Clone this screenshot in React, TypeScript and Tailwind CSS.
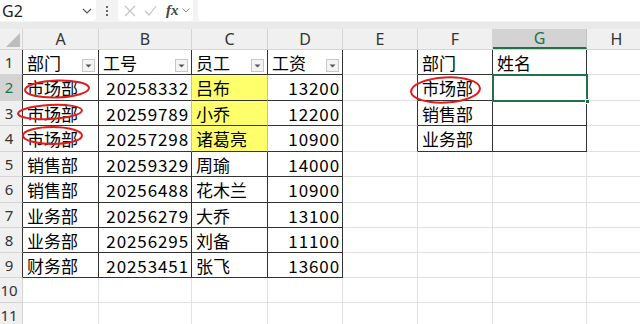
import React from "react";

const COLS = [
  { k: "A", w: 76 },
  { k: "B", w: 93 },
  { k: "C", w: 76 },
  { k: "D", w: 75 },
  { k: "E", w: 75 },
  { k: "F", w: 75 },
  { k: "G", w: 94 },
  { k: "H", w: 60 },
];
const ROW_H = [25, 26, 25, 26, 25, 26, 25, 25, 25, 25, 25, 25];

type Cell = { t?: string; right?: boolean; num?: boolean };
const data: Record<string, Cell> = {};
const put = (ref: string, t: string, right = false, num = false) => (data[ref] = { t, right, num });
put("A1", "部门");
put("B1", "工号");
put("C1", "员工");
put("D1", "工资");
const rows = [
  ["市场部", "20258332", "吕布", "13200"],
  ["市场部", "20259789", "小乔", "12200"],
  ["市场部", "20257298", "诸葛亮", "10900"],
  ["销售部", "20259329", "周瑜", "14000"],
  ["销售部", "20256488", "花木兰", "10900"],
  ["业务部", "20256279", "大乔", "13100"],
  ["业务部", "20256295", "刘备", "11100"],
  ["财务部", "20253451", "张飞", "13600"],
];
rows.forEach((r, i) => {
  const n = i + 2;
  put("A" + n, r[0]);
  put("B" + n, r[1], true, true);
  put("C" + n, r[2]);
  put("D" + n, r[3], true, true);
});
put("F1", "部门");
put("G1", "姓名");
put("F2", "市场部");
put("F3", "销售部");
put("F4", "业务部");

const inTable = (c: number, r: number) =>
  (c >= 0 && c <= 3 && r >= 1 && r <= 9) || (c >= 5 && c <= 6 && r >= 1 && r <= 4);
const isYellow = (c: number, r: number) => c === 2 && r >= 2 && r <= 4;

function FilterBtn() {
  return (
    <div className="absolute right-[3px] top-[9px] w-[13px] h-[13px] border border-[#c8c8c8] bg-[#f4f4f4] flex items-center justify-center">
      <svg width="7" height="4" viewBox="0 0 7 4">
        <path d="M0.5 0.5 L3.5 3.5 L6.5 0.5 Z" fill="#555" />
      </svg>
    </div>
  );
}

export default function App() {
  return (
    <div
      className="relative w-[640px] h-[324px] overflow-hidden bg-white"
      style={{ fontFamily: '"Noto Sans CJK SC", "Noto Sans", sans-serif' }}
    >
      {/* formula bar */}
      <div className="h-[29px] bg-[#e9e9e9]">
        <div className="flex h-[22px] bg-[#f3f3f3]">
          <div className="w-[96px] h-[21px] bg-white rounded-br-[4px] flex items-center pl-[2px] pr-[4px]">
            <span className="text-[16px] text-[#222] leading-none" style={{ fontFamily: '"Noto Sans", sans-serif' }}>G2</span>
            <svg className="ml-auto" width="10" height="6" viewBox="0 0 10 6">
              <path d="M1 1 L5 5 L9 1" stroke="#555" strokeWidth="1.2" fill="none" />
            </svg>
          </div>
          <div className="w-[22px] flex items-center justify-center">
            <div className="flex flex-col gap-[2px]">
              <div className="w-[2px] h-[2px] bg-[#666]" />
              <div className="w-[2px] h-[2px] bg-[#666]" />
              <div className="w-[2px] h-[2px] bg-[#666]" />
            </div>
          </div>
          <div className="w-[75px] h-[21px] bg-white rounded-b-[4px] flex items-center pl-[6px]">
            <svg width="12" height="12" viewBox="0 0 12 12">
              <path d="M1 1 L11 11 M11 1 L1 11" stroke="#c4c4c4" strokeWidth="1.2" />
            </svg>
            <svg className="ml-[8px]" width="13" height="12" viewBox="0 0 13 12">
              <path d="M1 6 L5 10 L12 1" stroke="#c4c4c4" strokeWidth="1.2" fill="none" />
            </svg>
            <span
              className="ml-[9px] text-[15px] italic font-bold text-[#444] leading-none"
              style={{ fontFamily: '"Liberation Serif", serif' }}
            >
              fx
            </span>
            <svg className="ml-[3px]" width="8" height="5" viewBox="0 0 8 5">
              <path d="M0.5 0.5 L4 4 L7.5 0.5" stroke="#888" strokeWidth="1" fill="none" />
            </svg>
          </div>
          <div className="ml-[5px] flex-1 h-[21px] bg-white rounded-bl-[4px]" />
        </div>
      </div>

      {/* column headers */}
      <div className="flex h-[21px] bg-[#f0f0f0] border-b border-[#d4d4d4]" style={{ fontFamily: '"Noto Sans", sans-serif' }}>
        <div className="w-[23px] shrink-0 relative border-r border-[#d4d4d4]">
          <svg className="absolute right-[2px] bottom-[2px]" width="14" height="14" viewBox="0 0 14 14">
            <path d="M14 0 L14 14 L0 14 Z" fill="#bdbdbd" />
          </svg>
        </div>
        {COLS.map((c) => (
          <div
            key={c.k}
            className={
              c.k === "G"
                ? "shrink-0 flex items-center justify-center text-[16px] text-[#217346] bg-[#d3d3d3] border-r border-[#c4c4c4] border-b-2 border-b-[#217346] leading-none"
                : "shrink-0 flex items-center justify-center text-[16px] text-[#333] border-r border-[#d4d4d4] leading-none"
            }
            style={{ width: c.w }}
          >
            {c.k}
          </div>
        ))}
      </div>

      {/* rows */}
      {ROW_H.map((h, ri) => {
        const r = ri + 1;
        const rowDark = (c: number) => inTable(c, r) || inTable(c, r + 1);
        return (
          <div key={r} className="flex" style={{ height: h }}>
            <div
              className={
                (r === 2
                  ? "bg-[#d3d3d3] text-[#217346] "
                  : "bg-[#f0f0f0] text-[#333] ") +
                (inTable(0, r)
                  ? "w-[23px] shrink-0 flex items-center text-[15px] leading-none border-b border-[#d4d4d4] border-r border-r-[#333]"
                  : "w-[23px] shrink-0 flex items-center text-[15px] leading-none border-b border-[#d4d4d4] border-r border-r-[#d4d4d4]")
              }
              style={{ fontFamily: '"Noto Sans", sans-serif' }}
            >
              <div className="w-[18px] flex justify-center whitespace-nowrap">{r}</div>
            </div>
            {COLS.map((col, ci) => {
              const ref = col.k + r;
              const cell = data[ref];
              const darkR = inTable(ci, r) || inTable(ci + 1, r);
              const darkB = rowDark(ci);
              const yellow = isYellow(ci, r);
              const yellowR = yellow || isYellow(ci + 1, r);
              let cls = "shrink-0 relative flex items-center text-[17px] text-black leading-none border-r border-b ";
              cls += yellowR ? "border-r-[#e0c828] " : darkR ? "border-r-[#333] " : "border-r-[#e1e1e1] ";
              cls += darkB ? "border-b-[#333] " : "border-b-[#e1e1e1] ";
              cls += yellow ? "bg-[#ffff6b] " : "";
              cls += cell?.right ? "justify-end pr-[2px] " : "pl-[4px] ";
              return (
                <div key={ref} className={cls} style={{ width: col.w }}>
                  {cell?.t && (
                    <span className={cell.num ? "tracking-[0.9px]" : ""}>{cell.t}</span>
                  )}
                  {r === 1 && ci <= 3 && <FilterBtn />}
                </div>
              );
            })}
          </div>
        );
      })}

      {/* selected cell G2 */}
      <div className="absolute left-[492px] top-[74px] w-[96px] h-[28px] border-2 border-[#217346]" />
      <div className="absolute left-[585px] top-[99px] w-[5px] h-[5px] bg-[#217346] border border-white" />

      {/* red ellipses */}
      <svg className="absolute left-0 top-0 pointer-events-none" width="640" height="324">
        <ellipse cx="57" cy="89" rx="32" ry="8.5" fill="none" stroke="#e31b1b" strokeWidth="2" transform="rotate(-2 57 89)" />
        <ellipse cx="50" cy="112" rx="32" ry="7" fill="none" stroke="#e31b1b" strokeWidth="2" transform="rotate(-3 50 112)" />
        <ellipse cx="52.5" cy="135.5" rx="29.5" ry="8.5" fill="none" stroke="#e31b1b" strokeWidth="2" />
        <ellipse cx="445.5" cy="90" rx="34.5" ry="12.5" fill="none" stroke="#e31b1b" strokeWidth="2" transform="rotate(-3 445.5 90)" />
      </svg>
    </div>
  );
}
